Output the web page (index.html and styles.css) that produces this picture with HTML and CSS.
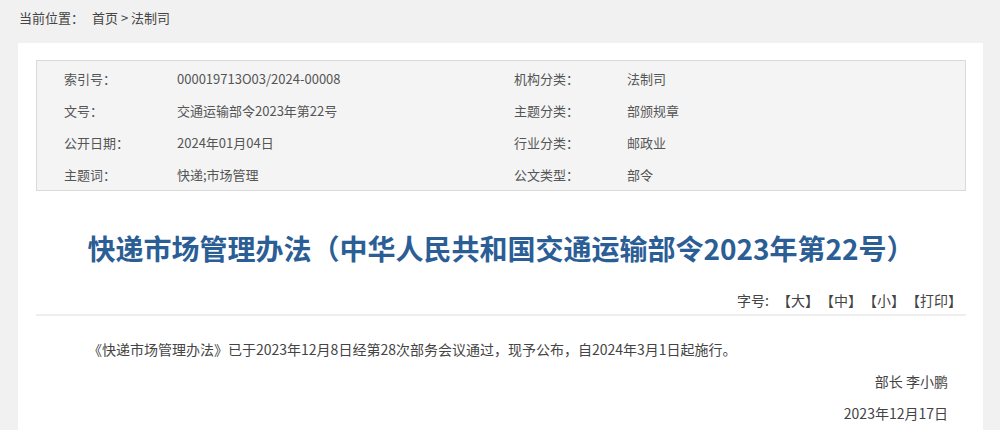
FILE: index.html
```html
<!DOCTYPE html>
<html lang="zh-CN">
<head>
<meta charset="utf-8">
<title>快递市场管理办法</title>
<link rel="stylesheet" href="styles.css">
</head>
<body>
<div class="crumb">当前位置：<span class="home">首页</span> &gt; 法制司</div>
<div class="card">
  <div class="info">
    <span class="lab">索引号：</span><span class="val">000019713O03/2024-00008</span>
    <span class="lab">机构分类：</span><span class="val">法制司</span>
    <span class="lab">文号：</span><span class="val">交通运输部令2023年第22号</span>
    <span class="lab">主题分类：</span><span class="val">部颁规章</span>
    <span class="lab">公开日期：</span><span class="val">2024年01月04日</span>
    <span class="lab">行业分类：</span><span class="val">邮政业</span>
    <span class="lab">主题词：</span><span class="val">快递;市场管理</span>
    <span class="lab">公文类型：</span><span class="val">部令</span>
  </div>
  <h1 class="title">快递市场管理办法（中华人民共和国交通运输部令2023年第22号）</h1>
  <div class="tools">字号:<span class="opt">【大】</span><span class="opt">【中】</span><span class="opt">【小】</span><span class="opt">【打印】</span></div>
  <div class="content">
    <p class="para">《快递市场管理办法》已于2023年12月8日经第28次部务会议通过，现予公布，自2024年3月1日起施行。</p>
    <p class="sign">部长 李小鹏</p>
    <p class="sign">2023年12月17日</p>
  </div>
</div>
</body>
</html>
```
FILE: styles.css
```css
html, body {
  margin: 0;
  padding: 0;
  background: #f1f1f1;
  font-family: "Noto Sans CJK SC", "Microsoft YaHei", sans-serif;
  color: #333;
}
.crumb {
  height: 43px;
  padding: 8px 0 0 19px;
  box-sizing: border-box;
  font-size: 13px;
  line-height: 20px;
  color: #444;
}
.home {
  margin-left: 8px;
}
.card {
  margin-left: 18px;
  width: 965px;
  min-height: 400px;
  background: #fff;
  padding: 17px 17px 0 18px;
  box-sizing: border-box;
}
.info {
  display: grid;
  grid-template-columns: 113px 337px 113px 1fr;
  grid-auto-rows: 32px;
  align-items: center;
  background: #f4f4f4;
  border: 1px solid #dadada;
  padding: 1px 0 0 27px;
  font-size: 13px;
  color: #555;
}
.title {
  margin: 37px 0 0;
  text-align: center;
  font-size: 28px;
  line-height: 40px;
  font-weight: bold;
  color: #2c5e96;
}
.tools {
  margin-top: 22px;
  text-align: right;
  padding-right: 4px;
  font-size: 14px;
  line-height: 20px;
  color: #444;
  padding-bottom: 4px;
  border-bottom: 2px solid #eeeeee;
}
.opt {
  margin-left: 8px;
}
.content {
  padding: 0 18px 0 52px;
}
.para {
  margin: 22px 0 0;
  font-size: 14px;
  line-height: 22px;
  color: #444;
}
.sign {
  margin: 10px 0 0;
  text-align: right;
  font-size: 14px;
  line-height: 22px;
  color: #444;
}
```
